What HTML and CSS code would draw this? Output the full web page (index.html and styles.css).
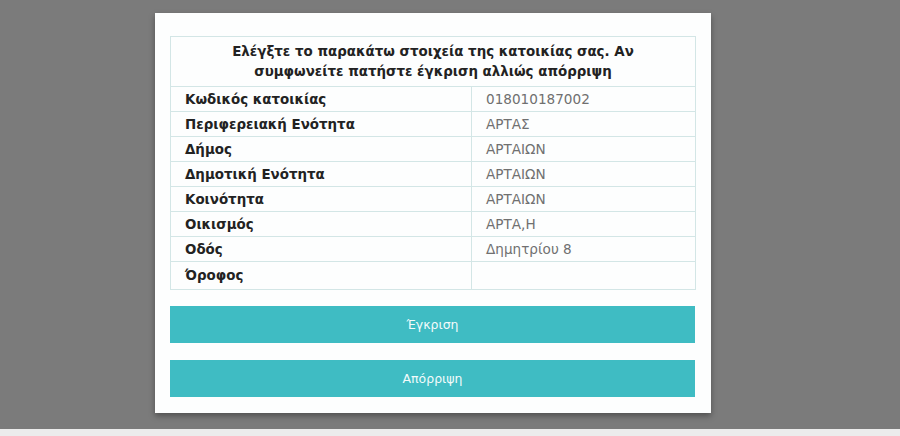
FILE: index.html
```html
<!DOCTYPE html>
<html lang="el">
<head>
<meta charset="utf-8">
<link rel="stylesheet" href="styles.css">
</head>
<body>
<div class="overlay">
  <div class="modal">
    <table class="info">
      <tr><th colspan="2">Ελέγξτε το παρακάτω στοιχεία της κατοικίας σας. Αν<br>συμφωνείτε πατήστε έγκριση αλλιώς απόρριψη</th></tr>
      <tr><td class="lbl">Κωδικός κατοικίας</td><td class="val">018010187002</td></tr>
      <tr><td class="lbl">Περιφερειακή Ενότητα</td><td class="val">ΑΡΤΑΣ</td></tr>
      <tr><td class="lbl">Δήμος</td><td class="val">ΑΡΤΑΙΩΝ</td></tr>
      <tr><td class="lbl">Δημοτική Ενότητα</td><td class="val">ΑΡΤΑΙΩΝ</td></tr>
      <tr><td class="lbl">Κοινότητα</td><td class="val">ΑΡΤΑΙΩΝ</td></tr>
      <tr><td class="lbl">Οικισμός</td><td class="val">ΑΡΤΑ,Η</td></tr>
      <tr><td class="lbl">Οδός</td><td class="val">Δημητρίου 8</td></tr>
      <tr><td class="lbl last">Όροφος</td><td class="val last"></td></tr>
    </table>
    <button class="btn first">Έγκριση</button>
    <button class="btn">Απόρριψη</button>
  </div>
</div>
<div class="strip"></div>
</body>
</html>
```
FILE: styles.css
```css
html, body { margin: 0; padding: 0; }
body {
  width: 900px;
  height: 436px;
  overflow: hidden;
  background: #7b7b7b;
  font-family: "DejaVu Sans", Verdana, sans-serif;
}
.overlay {
  height: 429px;
  padding-top: 13px;
  box-sizing: border-box;
}
.strip {
  height: 7px;
  background: #ececec;
}
.modal {
  margin-left: 155px;
  width: 556px;
  height: 400px;
  box-sizing: border-box;
  background: #fdfefe;
  padding: 23px 16px 16px 15px;
  box-shadow: 0 3px 6px rgba(0,0,0,0.35);
  display: flex;
  flex-direction: column;
}
.info {
  width: 526px;
  border-collapse: collapse;
  border: 1px solid #d3e6e6;
}
.info th {
  height: 50px;
  padding: 0;
  box-sizing: border-box;
  font-size: 13.4px;
  font-weight: bold;
  line-height: 20px;
  color: #222;
  border-bottom: 1px solid #d3e6e6;
}
.info td {
  height: 25px;
  padding: 0 0 0 14px;
  box-sizing: border-box;
  font-size: 13.4px;
  border-bottom: 1px solid #d3e6e6;
}
.info td.last { height: 28px; border-bottom: none; }
.info td.lbl {
  width: 301px;
  font-weight: bold;
  color: #222;
  border-right: 1px solid #d3e6e6;
}
.info td.val {
  color: #707070;
  font-size: 13.6px;
}
.btn {
  width: 525px;
  height: 37px;
  border: none;
  background: #3fbcc3;
  color: #f2fbfb;
  font-family: "DejaVu Sans", Verdana, sans-serif;
  font-size: 12.5px;
  padding: 0;
  margin-top: 17px;
}
.btn.first { margin-top: 16px; }
```
